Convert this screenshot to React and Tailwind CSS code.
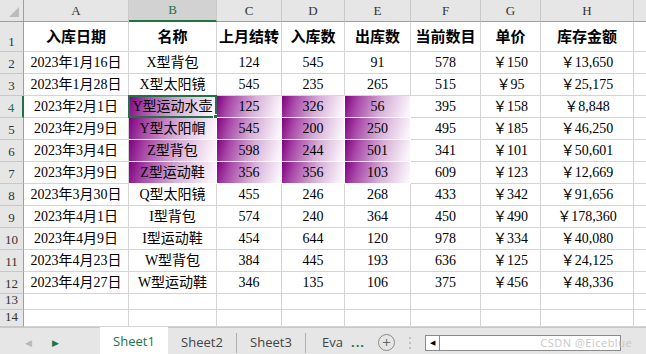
import React from "react";

const cols = ["A", "B", "C", "D", "E", "F", "G", "H"];

const rows = [
  ["2023年1月16日", "X型背包", "124", "545", "91", "578", "￥150", "￥13,650"],
  ["2023年1月28日", "X型太阳镜", "545", "235", "265", "515", "￥95", "￥25,175"],
  ["2023年2月1日", "Y型运动水壶", "125", "326", "56", "395", "￥158", "￥8,848"],
  ["2023年2月9日", "Y型太阳帽", "545", "200", "250", "495", "￥185", "￥46,250"],
  ["2023年3月4日", "Z型背包", "598", "244", "501", "341", "￥101", "￥50,601"],
  ["2023年3月9日", "Z型运动鞋", "356", "356", "103", "609", "￥123", "￥12,669"],
  ["2023年3月30日", "Q型太阳镜", "455", "246", "268", "433", "￥342", "￥91,656"],
  ["2023年4月1日", "I型背包", "574", "240", "364", "450", "￥490", "￥178,360"],
  ["2023年4月9日", "I型运动鞋", "454", "644", "120", "978", "￥334", "￥40,080"],
  ["2023年4月23日", "W型背包", "384", "445", "193", "636", "￥125", "￥24,125"],
  ["2023年4月27日", "W型运动鞋", "346", "135", "106", "375", "￥456", "￥48,336"],
];

const heads = ["入库日期", "名称", "上月结转", "入库数", "出库数", "当前数目", "单价", "库存金额"];

const cellFont = { fontFamily: '"Liberation Serif", "Noto Sans CJK SC", serif' };

// rows 4-7 (index 2..5), columns B-E (index 1..4) carry the purple fill
const isFilled = (r, c) => r >= 2 && r <= 5 && c >= 1 && c <= 4;

function RowHead({ n, active }) {
  return (
    <div
      className={`flex items-end justify-center bg-[#e6e6e6] border-b border-[#c8c8c8] text-[13px] leading-[18px] ${
        active ? "text-[#217346] border-r-2 border-r-[#217346]" : "text-[#333] border-r border-r-[#9e9e9e]"
      }`}
      style={cellFont}
    >
      {n}
    </div>
  );
}

export default function App() {
  return (
    <div className="w-[646px] h-[354px] overflow-hidden bg-white flex flex-col">
      <div className="grid grid-cols-[24px_105px_88px_65px_63px_66px_70px_60px_93px_1fr] grid-rows-[22px_30px_repeat(11,22px)_16px_17px]">
        {/* corner */}
        <div className="relative bg-[#e6e6e6] border-r border-b border-[#9e9e9e]">
          <div className="absolute right-[4px] bottom-[4px] w-0 h-0 border-l-[10px] border-l-transparent border-b-[10px] border-b-[#bcbcbc]" />
        </div>
        {cols.map((c) => (
          <div
            key={c}
            className={`flex items-center justify-center text-[13px] border-r border-r-[#c8c8c8] ${
              c === "B"
                ? "bg-[#d2d2d2] text-[#217346] border-b-2 border-b-[#217346]"
                : "bg-[#e6e6e6] text-[#333] border-b border-b-[#9e9e9e]"
            }`}
            style={cellFont}
          >
            {c}
          </div>
        ))}
        <div className="bg-[#e6e6e6] border-b border-[#9e9e9e]" />

        {/* header row */}
        <RowHead n={1} />
        {heads.map((h) => (
          <div
            key={h}
            className="flex items-center justify-center border-r border-b border-[#d4d4d4] text-[15px] font-bold text-black"
            style={{ fontFamily: '"Noto Sans CJK SC", sans-serif' }}
          >
            {h}
          </div>
        ))}
        <div className="border-b border-[#d4d4d4]" />

        {rows.map((r, ri) => (
          <React.Fragment key={ri}>
            <RowHead n={ri + 2} active={ri === 2} />
            {r.map((v, ci) => {
              const filled = isFilled(ri, ci);
              const selected = ri === 2 && ci === 1;
              return (
                <div
                  key={ci}
                  className={`relative flex items-center justify-center text-[14px] text-black border-r border-b ${
                    filled
                      ? "border-white bg-[linear-gradient(108deg,#800080_0%,#a848a8_20%,#d7aed7_55%,#fbf5fb_95%)]"
                      : "border-[#d4d4d4]"
                  }`}
                  style={cellFont}
                >
                  {v}
                  {selected && (
                    <div className="absolute left-[-1px] top-[-1px] right-[-1px] bottom-[-1px] border-2 border-[#217346]">
                      <div className="absolute right-[-4px] bottom-[-4px] w-[6px] h-[6px] bg-[#217346] border border-white" />
                    </div>
                  )}
                </div>
              );
            })}
            <div className="border-b border-[#d4d4d4]" />
          </React.Fragment>
        ))}

        {[13, 14].map((n) => (
          <React.Fragment key={n}>
            <RowHead n={n} />
            {cols.map((c) => (
              <div key={c} className="border-r border-b border-[#d4d4d4]" />
            ))}
            <div className="border-b border-[#d4d4d4]" />
          </React.Fragment>
        ))}
      </div>

      {/* sheet tabs */}
      <div
        className="flex-1 flex items-stretch bg-[#e6e6e6] border-t border-[#c8c8c8] text-[13px]"
        style={{ fontFamily: '"Open Sans", "Noto Sans", sans-serif' }}
      >
        <div className="w-[100px] flex items-center">
          <span className="ml-[25px] text-[#b8b8b8] text-[9px]">◀</span>
          <span className="ml-[20px] text-[#217346] text-[9px]">▶</span>
        </div>
        <div className="w-[68px] flex items-center justify-center bg-white text-[#217346] border-b-2 border-[#217346] -mt-px">
          Sheet1
        </div>
        <div className="w-[69px] flex items-center justify-center text-[#444] border-r border-[#b0b0b0] my-[5px]">
          Sheet2
        </div>
        <div className="w-[69px] flex items-center justify-center text-[#444] border-r border-[#b0b0b0] my-[5px]">
          Sheet3
        </div>
        <div className="flex items-center pl-[16px] text-[#444]">Eva</div>
        <div className="flex items-center pl-[8px] text-[#217346] font-bold tracking-[1px]">...</div>
        <div className="flex items-center pl-[13px]">
          <div className="w-[17px] h-[17px] rounded-full border border-[#8a8a8a] flex items-center justify-center text-[#666] text-[15px] leading-none">
            +
          </div>
        </div>
        <div className="flex flex-col items-center justify-center gap-[3px] pl-[14px]">
          <div className="w-[2px] h-[2px] bg-[#c0c0c0]" />
          <div className="w-[2px] h-[2px] bg-[#c0c0c0]" />
          <div className="w-[2px] h-[2px] bg-[#c0c0c0]" />
        </div>
        <div className="flex items-center pl-[14px]">
          <div className="relative w-[196px] h-[16px] bg-white border border-[#8a8a8a] flex items-center">
            <div className="w-[14px] h-full border-r border-[#8a8a8a] flex items-center justify-center text-[7px] text-black">
              ◀
            </div>
            <span className="absolute right-[-12px] text-[11px] text-[#c8c8c8] tracking-[0.5px]">CSDN @Eiceblue</span>
          </div>
        </div>
      </div>
    </div>
  );
}
